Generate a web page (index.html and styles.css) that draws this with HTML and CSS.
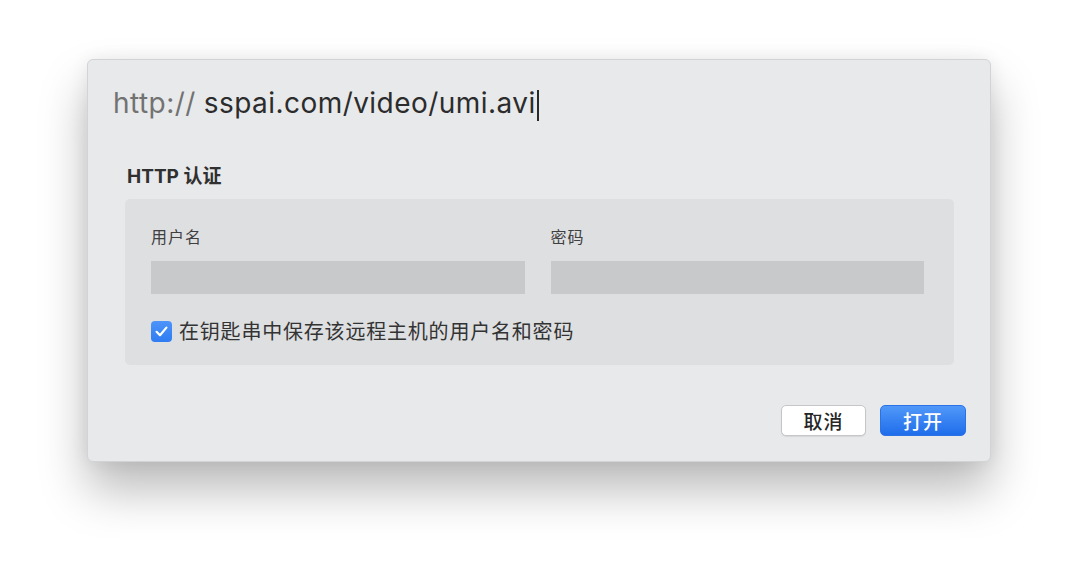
FILE: index.html
```html
<!DOCTYPE html>
<html lang="zh-CN">
<head>
<meta charset="utf-8">
<title>打开网络 URL</title>
<link rel="stylesheet" href="styles.css">
</head>
<body>
<div class="stage">
  <div class="dialog">
    <div class="url"><span class="scheme">http://</span> <span class="path">sspai.com/video/umi.avi</span><span class="caret"></span></div>
    <div class="section-title">HTTP <span class="cjk">认证</span></div>
    <div class="panel">
      <div class="fields">
        <div class="field">
          <div class="label">用户名</div>
          <div class="input"></div>
        </div>
        <div class="field">
          <div class="label">密码</div>
          <div class="input"></div>
        </div>
      </div>
      <div class="check-row">
        <span class="checkbox">
          <svg viewBox="0 0 21 21" width="21" height="21"><path d="M5.6 10.8 L9 14.2 L15.4 6.6" fill="none" stroke="#fff" stroke-width="2.2" stroke-linecap="round" stroke-linejoin="round"/></svg>
        </span>
        <span class="check-label">在钥匙串中保存该远程主机的用户名和密码</span>
      </div>
    </div>
    <div class="footer">
      <button class="btn btn-cancel">取消</button>
      <button class="btn btn-primary">打开</button>
    </div>
  </div>
</div>
</body>
</html>
```
FILE: styles.css
```css
html, body {
  margin: 0;
  padding: 0;
  background: #ffffff;
}
body {
  font-family: "Inter", "Noto Sans CJK SC", sans-serif;
  color: #333;
  min-height: 578px;
}
.stage {
  box-sizing: border-box;
  min-height: 578px;
  padding: 59px 0 0 87px;
}
.dialog {
  box-sizing: border-box;
  width: 904px;
  height: 403px;
  background: #e8e9eb;
  border: 1px solid #d2d3d5;
  border-radius: 6px;
  padding: 25px 24px 25px 25px;
  box-shadow: 0 28px 48px rgba(0, 0, 0, 0.27), 0 0 18px rgba(0, 0, 0, 0.07);
}
.url {
  height: 36px;
  line-height: 36px;
  font-size: 28px;
  letter-spacing: 0.45px;
  white-space: nowrap;
  display: flex;
  align-items: center;
}
.scheme {
  color: #727272;
}
.path {
  color: #2c2c2c;
  margin-left: 8px;
}
.caret {
  display: inline-block;
  width: 2px;
  height: 31px;
  background: #2a2a2a;
  margin-left: 1px;
  margin-top: 4px;
}
.section-title {
  margin-top: 42px;
  padding-left: 14px;
  height: 24px;
  line-height: 24px;
  font-size: 19px;
  font-weight: 700;
  color: #303030;
}
.section-title .cjk {
  font-family: "Noto Sans CJK SC", sans-serif;
  font-weight: 700;
  font-size: 19px;
}
.panel {
  margin: 12px 12px 0 12px;
  height: 166px;
  box-sizing: border-box;
  background: #dedfe1;
  border-radius: 5px;
  padding: 27px 30px 0 26px;
}
.fields {
  display: grid;
  grid-template-columns: 1fr 1fr;
  column-gap: 26px;
}
.label {
  font-family: "Noto Sans CJK SC", sans-serif;
  font-size: 16px;
  line-height: 20px;
  letter-spacing: 1px;
  color: #404040;
}
.input {
  margin-top: 15px;
  height: 33px;
  background: #c8c9cb;
}
.check-row {
  margin-top: 25px;
  display: flex;
  align-items: center;
  gap: 7px;
  height: 24px;
}
.checkbox {
  width: 21px;
  height: 21px;
  border-radius: 4px;
  background: linear-gradient(#4d94fa, #2f7cf2);
  display: flex;
  flex-shrink: 0;
}
.check-label {
  font-family: "Noto Sans CJK SC", sans-serif;
  font-size: 20px;
  line-height: 24px;
  letter-spacing: 0.8px;
  color: #333;
}
.footer {
  margin-top: 40px;
  display: flex;
  justify-content: flex-end;
  gap: 14px;
}
.btn {
  font-family: "Noto Sans CJK SC", sans-serif;
  font-size: 19px;
  font-weight: 500;
  letter-spacing: 1px;
  height: 31px;
  line-height: 29px;
  padding: 0;
  border-radius: 5px;
  cursor: default;
}
.btn-cancel {
  width: 85px;
  background: #ffffff;
  color: #262626;
  border: 1px solid #c6c6c8;
  box-shadow: 0 1px 1px rgba(0, 0, 0, 0.08);
}
.btn-primary {
  width: 86px;
  background: linear-gradient(#5098f9, #1f6deb);
  color: #ffffff;
  border: 1px solid #2a72e6;
}
```
